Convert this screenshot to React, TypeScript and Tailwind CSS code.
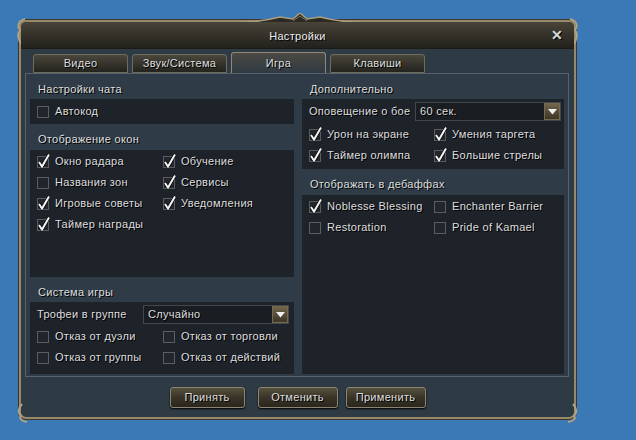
import React from "react";

const font = "font-['Liberation_Sans',sans-serif]";
const shadow = "[text-shadow:1px_1px_0_#000]";
const txt = `whitespace-nowrap text-[11px] tracking-[0.3px] text-[#dedede] ${shadow}`;

function Box({ checked }: { checked?: boolean }) {
  return (
    <svg width="16" height="16" viewBox="0 0 16 16" className="shrink-0 -mt-[2px]">
      <rect x="1.5" y="3.5" width="11" height="11" fill="#22262c" stroke="#5a5e63" />
      {checked ? (
        <>
          <path d="M3 9 L6 13.5 L13 1.5" fill="none" stroke="#000" strokeWidth="3.2" />
          <path d="M3 9 L6 13.5 L13 1.5" fill="none" stroke="#f4f4f4" strokeWidth="2" />
        </>
      ) : null}
    </svg>
  );
}

function Check({ label, checked }: { label: string; checked?: boolean }) {
  return (
    <div className="flex h-[21px] items-center gap-[3px]">
      <Box checked={checked} />
      <span className={txt}>{label}</span>
    </div>
  );
}

function Row({ children, col2 }: { children: React.ReactNode; col2: string }) {
  return <div className={`grid ${col2}`}>{children}</div>;
}

function Header({ title, h }: { title: string; h: string }) {
  return <div className={`${h} pl-[8px] pt-[9px] leading-[13px] ${txt}`}>{title}</div>;
}

function Select({ value, w }: { value: string; w: string }) {
  return (
    <div className={`flex h-[19px] ${w} items-center justify-between border border-[#43484f] bg-[#1a1d22] pl-[4px]`}>
      <span className={txt}>{value}</span>
      <div className="flex h-[17px] w-[16px] items-center justify-center border border-[#75694f] bg-gradient-to-b from-[#71654c] to-[#3d3627]">
        <svg width="9" height="6" viewBox="0 0 9 6">
          <path d="M0 0 H9 L4.5 5.5 Z" fill="#f0f0f0" />
        </svg>
      </div>
    </div>
  );
}

function Tab({ label, active }: { label: string; active?: boolean }) {
  return (
    <div
      className={`flex w-[95px] items-center justify-center rounded-t-[3px] border ${txt} ${
        active
          ? "h-[21px] border-[#8f8a78] border-b-0 bg-gradient-to-b from-[#4b4a42] to-[#2f3a42]"
          : "h-[19px] border-[#6f6b5d] bg-gradient-to-b from-[#4a473c] to-[#24231e]"
      }`}
    >
      {label}
    </div>
  );
}

function Btn({ label, w }: { label: string; w: string }) {
  return (
    <div
      className={`flex h-[21px] ${w} items-center justify-center rounded-[3px] border border-[#8a8470] bg-gradient-to-b from-[#56503e] via-[#3a3427] to-[#2a261d] shadow-[0_1px_2px_#000] ${txt}`}
    >
      {label}
    </div>
  );
}

export default function App() {
  return (
    <div className={`min-h-[440px] w-full bg-[#3a79b6] pl-[19px] pt-[20px] ${font}`}>
      <div className="relative flex h-[399px] w-[557px] flex-col rounded-[7px] border-2 border-[#958a6c] bg-[#2e3b45] shadow-[0_0_0_1px_#3d3628]">
        {/* top crest ornament */}
        <svg width="150" height="14" viewBox="0 0 150 14" className="absolute left-[204px] top-[-9px]">
          <path
            d="M0 10 C25 10 40 8 55 4 L68 6 L75 0 L82 6 L95 4 C110 8 125 10 150 10"
            fill="#2c2a22"
            stroke="#a89c7c"
            strokeWidth="1.6"
          />
          <path d="M68 8 L75 3 L82 8" fill="none" stroke="#7a705a" strokeWidth="1" />
        </svg>
        <svg width="14" height="28" viewBox="0 0 14 28" className="absolute left-[-6px] top-[-4px]">
          <path d="M10 1 C3 3 2 8 5 12 C2 16 3 22 7 27" fill="none" stroke="#b0a484" strokeWidth="2" />
        </svg>
        <svg width="14" height="28" viewBox="0 0 14 28" className="absolute right-[-6px] top-[-4px]">
          <path d="M4 1 C11 3 12 8 9 12 C12 16 11 22 7 27" fill="none" stroke="#b0a484" strokeWidth="2" />
        </svg>
        <svg width="14" height="20" viewBox="0 0 14 20" className="absolute bottom-[-6px] left-[-6px]">
          <path d="M7 1 C3 6 3 10 6 13 C4 15 6 18 12 19" fill="none" stroke="#b0a484" strokeWidth="2" />
        </svg>
        <svg width="14" height="20" viewBox="0 0 14 20" className="absolute bottom-[-6px] right-[-6px]">
          <path d="M7 1 C11 6 11 10 8 13 C10 15 8 18 2 19" fill="none" stroke="#b0a484" strokeWidth="2" />
        </svg>

        {/* title bar */}
        <div className="relative flex h-[27px] items-center justify-center rounded-t-[5px] border-b border-[#1b1a16] bg-gradient-to-b from-[#48443a] via-[#35322a] to-[#22211c]">
          <span className={`pt-[2px] ${txt} text-[#ececec]`}>Настройки</span>
          <span className={`absolute right-[11px] top-[5px] text-[14px] font-bold leading-[16px] text-[#d8d8d8] ${shadow}`}>
            ✕
          </span>
        </div>

        {/* tabs */}
        <div className="flex h-[24px] items-end gap-[4px] pl-[12px]">
          <Tab label="Видео" />
          <Tab label="Звук/Система" />
          <Tab label="Игра" active />
          <Tab label="Клавиши" />
        </div>

        {/* content frame */}
        <div className="ml-[4px] mr-[5px] flex h-[304px] gap-[8px] border border-[#56626c] bg-[#2f3c47] px-[4px] pb-[2px]">
          {/* left column */}
          <div className="flex w-[264px] flex-col">
            <Header title="Настройки чата" h="h-[25px]" />
            <div className="h-[25px] bg-[#1e2229] pl-[6px] pt-[2px]">
              <Check label="Автокод" />
            </div>
            <Header title="Отображение окон" h="h-[26px]" />
            <div className="h-[127px] bg-[#1e2229] pl-[6px] pt-[1px]">
              <Row col2="grid-cols-[126px_1fr]">
                <Check label="Окно радара" checked />
                <Check label="Обучение" checked />
                <Check label="Названия зон" />
                <Check label="Сервисы" checked />
                <Check label="Игровые советы" checked />
                <Check label="Уведомления" checked />
                <Check label="Таймер награды" checked />
              </Row>
            </div>
            <Header title="Система игры" h="h-[25px]" />
            <div className="flex-1 bg-[#1e2229] pl-[7px] pr-[5px] pt-[3px]">
              <div className="flex h-[19px] items-center justify-between">
                <span className={txt}>Трофеи в группе</span>
                <Select value="Случайно" w="w-[146px]" />
              </div>
              <div className="-ml-[1px] pt-[2px]">
                <Row col2="grid-cols-[126px_1fr]">
                  <Check label="Отказ от дуэли" />
                  <Check label="Отказ от торговли" />
                  <Check label="Отказ от группы" />
                  <Check label="Отказ от действий" />
                </Row>
              </div>
            </div>
          </div>

          {/* right column */}
          <div className="flex flex-1 flex-col">
            <Header title="Дополнительно" h="h-[25px]" />
            <div className="h-[70px] bg-[#1e2229] pl-[7px] pr-[3px] pt-[3px]">
              <div className="flex h-[19px] items-center justify-between">
                <span className={txt}>Оповещение о бое</span>
                <Select value="60 сек." w="w-[146px]" />
              </div>
              <div className="-ml-[1px] pt-[3px]">
                <Row col2="grid-cols-[125px_1fr]">
                  <Check label="Урон на экране" checked />
                  <Check label="Умения таргета" checked />
                  <Check label="Таймер олимпа" checked />
                  <Check label="Большие стрелы" checked />
                </Row>
              </div>
            </div>
            <Header title="Отображать в дебаффах" h="h-[26px]" />
            <div className="flex-1 bg-[#1e2229] pl-[6px] pt-[1px]">
              <Row col2="grid-cols-[125px_1fr]">
                <Check label="Noblesse Blessing" checked />
                <Check label="Enchanter Barrier" />
                <Check label="Restoration" />
                <Check label="Pride of Kamael" />
              </Row>
            </div>
          </div>
        </div>

        {/* buttons */}
        <div className="flex flex-1 items-start justify-center pt-[10px]">
          <Btn label="Принять" w="w-[75px]" />
          <div className="w-[13px]" />
          <Btn label="Отменить" w="w-[80px]" />
          <div className="w-[8px]" />
          <Btn label="Применить" w="w-[80px]" />
        </div>
      </div>
    </div>
  );
}
